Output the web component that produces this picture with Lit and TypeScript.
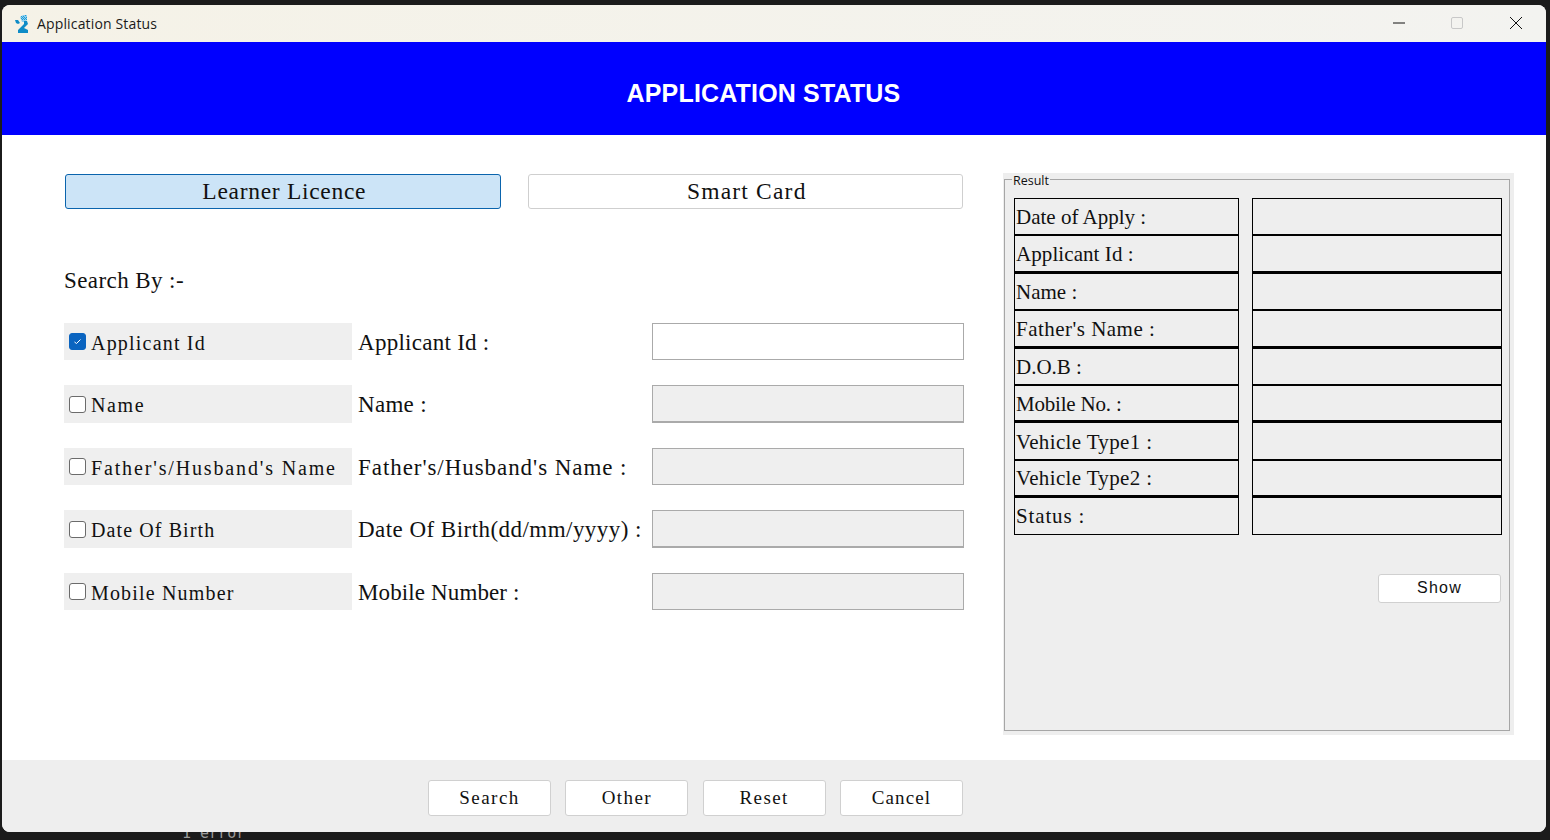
import { LitElement, html, css } from "lit";
import { customElement } from "lit/decorators.js";

// track = letter-spacing per text, the original font runs wider than Liberation Serif
const searchRows = [
  { check: "Applicant Id", checkTrack: 1.2, label: "Applicant Id :", labelTrack: 0.27, on: true },
  { check: "Name", checkTrack: 1.6, label: "Name :", labelTrack: 0.3, on: false },
  { check: "Father's/Husband's Name", checkTrack: 1.85, label: "Father's/Husband's Name :", labelTrack: 0.94, on: false },
  { check: "Date Of Birth", checkTrack: 1.1, label: "Date Of Birth(dd/mm/yyyy) :", labelTrack: 0.46, on: false },
  { check: "Mobile Number", checkTrack: 1.17, label: "Mobile Number :", labelTrack: 0.12, on: false },
];

const resultRows = [
  { label: "Date of Apply :", track: 0 },
  { label: "Applicant Id :", track: 0.08 },
  { label: "Name :", track: 0 },
  { label: "Father's Name :", track: 0.48 },
  { label: "D.O.B :", track: 0 },
  { label: "Mobile No. :", track: -0.2 },
  { label: "Vehicle Type1 :", track: 0.35 },
  { label: "Vehicle Type2 :", track: 0.35 },
  { label: "Status :", track: 0.85 },
];

const tabs = [
  { label: "Learner Licence", track: 0.7, active: true },
  { label: "Smart Card", track: 1.2, active: false },
];

const footerButtons = [
  { label: "Search", track: 1.5 },
  { label: "Other", track: 1.4 },
  { label: "Reset", track: 1.4 },
  { label: "Cancel", track: 1.1 },
];

@customElement("app-root")
export class AppRoot extends LitElement {
  static styles = css`
    :host {
      display: block;
      width: 1550px;
      height: 840px;
      overflow: hidden;
      background: #1b1b1b;
      font-family: "Liberation Serif", serif;
      color: #111;
    }
    .desktop {
      padding: 5px 4px 0 2px;
    }
    .window {
      height: 827px;
      display: flex;
      flex-direction: column;
      border-radius: 8px;
      overflow: hidden;
      background: #fff;
    }
    .titlebar {
      height: 37px;
      flex: none;
      display: flex;
      align-items: center;
      padding-right: 1px;
      background: linear-gradient(90deg, #f5f2e7, #f3f3f0);
      font-family: "Open Sans", "Liberation Sans", sans-serif;
      font-size: 14px;
      letter-spacing: 0.15px;
      color: #1a1a1a;
    }
    .app-icon {
      margin-left: 13px;
      margin-right: 6px;
      width: 16px;
      height: 18px;
    }
    .title-text {
      flex: 1;
    }
    .win-btn {
      width: 58px;
      height: 36px;
      margin-bottom: 1px;
      display: flex;
      align-items: center;
      justify-content: center;
    }
    .win-btn.max {
      margin-right: 1px;
    }
    .banner {
      height: 93px;
      flex: none;
      box-sizing: border-box;
      background: #0000ff;
      color: #fff;
      display: flex;
      align-items: center;
      justify-content: center;
      font-family: "Liberation Sans", sans-serif;
      font-weight: 700;
      font-size: 25px;
      letter-spacing: 0.17px;
      padding: 9px 21px 0 0;
    }
    .content {
      flex: 1;
      display: flex;
      padding: 38px 32px 25px 62px;
    }
    .left {
      width: 900px;
      flex: none;
      padding-top: 1px;
    }
    .tabs {
      display: flex;
      gap: 27px;
      padding-left: 1px;
      padding-right: 1px;
    }
    .tab {
      height: 35px;
      flex: 1 1 0;
      box-sizing: border-box;
      border: 1px solid #cfcfcf;
      border-radius: 3px;
      background: #fff;
      display: flex;
      align-items: center;
      justify-content: center;
      padding-left: 3px;
      font-size: 23.5px;
    }
    .tab.active {
      background: #cce4f7;
      border-color: #0a64ad;
    }
    .search-by {
      margin-top: 59px;
      height: 26px;
      line-height: 26px;
      font-size: 23px;
      letter-spacing: 0.42px;
    }
    .rows {
      margin-top: 28.9px;
      display: grid;
      grid-template-columns: 288px 300px 312px;
      grid-auto-rows: 37.5px;
      row-gap: 25px;
    }
    .check-cell {
      background: #efefef;
      display: flex;
      align-items: center;
      gap: 5px;
      padding-left: 5px;
      font-size: 20px;
      white-space: nowrap;
    }
    .check-text {
      padding-top: 3px;
    }
    .box {
      width: 15px;
      height: 15px;
      flex: none;
      border: 1px solid #6b6b6b;
      border-radius: 3px;
      background: #fff;
      display: flex;
      align-items: center;
      justify-content: center;
    }
    .box.on {
      background: #0a64c0;
      border-color: #0a64c0;
    }
    .field-label {
      display: flex;
      align-items: center;
      padding: 2px 0 0 6px;
      font-size: 23px;
      white-space: nowrap;
    }
    .input {
      box-sizing: border-box;
      border: 1px solid #aaa;
      background: #efefef;
    }
    .input.on {
      background: #fff;
    }
    .input.bottom {
      border-bottom-width: 2px;
    }
    .panel {
      margin-left: 39px;
      width: 511px;
      height: 562px;
      flex: none;
      box-sizing: border-box;
      background: #eee;
      padding: 0 4px 4px 1px;
    }
    fieldset {
      margin: -2px 0 0;
      height: calc(100% + 2px);
      box-sizing: border-box;
      border: 1px solid #a6a6a6;
      padding: 11px 8px 0 9px;
      min-width: 0;
    }
    legend {
      margin-left: -2px;
      padding: 4px 1px 0;
      font-family: "Open Sans", "Liberation Sans", sans-serif;
      font-size: 12.5px;
      line-height: 12px;
      color: #111;
    }
    .result-grid {
      display: grid;
      grid-template-columns: 225px 250px;
      column-gap: 13px;
      grid-auto-rows: 37.4px;
    }
    .result-cell {
      box-sizing: border-box;
      border: 1px solid #000;
      display: flex;
      align-items: center;
      padding: 2px 0 0 1px;
      font-size: 21px;
      white-space: nowrap;
    }
    .result-cell.thick {
      border-bottom-width: 2px;
    }
    .show-row {
      display: flex;
      justify-content: flex-end;
      margin-top: 39px;
    }
    .btn {
      box-sizing: border-box;
      width: 123px;
      border: 1px solid #d0d0d0;
      border-radius: 3px;
      background: #fff;
      display: flex;
      align-items: center;
      justify-content: center;
      color: #111;
    }
    .show {
      height: 29px;
      font-family: "Liberation Sans", sans-serif;
      font-size: 16px;
      letter-spacing: 1.2px;
    }
    .footer {
      height: 72px;
      flex: none;
      background: #eee;
      display: flex;
      gap: 14.33px;
      padding: 20px 0 0 426px;
      box-sizing: border-box;
    }
    .footer .btn {
      height: 36px;
      font-size: 19px;
    }
    .peek {
      padding-left: 182px;
      height: 8px;
      overflow: hidden;
      font-family: "DejaVu Sans Mono", monospace;
      font-size: 15px;
      line-height: 2px;
      color: #9a9a9a;
    }
  `;

  render() {
    return html`
      <div class="desktop">
        <div class="window">
          <div class="titlebar">
            <svg class="app-icon" viewBox="0 0 16 18">
              <path fill="#8fd0ee" d="M5 2l3-2h4v5l-2 2H7z" />
              <path fill="#1e9bd7" d="M6 1h1v1H6zM8 1h1v1H8zM10 0h1v1h-1zM7 2h1v1H7zM9 2h1v1H9zM11 2h1v1h-1zM6 3h1v1H6zM8 3h1v1H8zM10 3h1v1h-1zM7 4h1v1H7zM9 4h1v1H9zM11 4h1v1h-1z" />
              <path fill="#0f8cc7" d="M0 5h3l2 3-2 1-2-1zM9 6h3l1 3-4 4 4 2v3H3v-3l6-6z" />
            </svg>
            <span class="title-text">Application Status</span>
            <div class="win-btn">
              <svg width="12" height="12" viewBox="0 0 12 12"><path d="M0 6h12" stroke="#111" fill="none" /></svg>
            </div>
            <div class="win-btn max">
              <svg width="12" height="12" viewBox="0 0 12 12"><rect x=".5" y=".5" width="11" height="11" rx="1.5" stroke="#c8c8c8" fill="none" /></svg>
            </div>
            <div class="win-btn">
              <svg width="12" height="12" viewBox="0 0 12 12"><path d="M0 0l12 12M12 0L0 12" stroke="#111" fill="none" /></svg>
            </div>
          </div>
          <div class="banner">APPLICATION STATUS</div>
          <div class="content">
            <div class="left">
              <div class="tabs">
                ${tabs.map(
                  (t) => html`<div class="tab ${t.active ? "active" : ""}" style="letter-spacing: ${t.track}px">${t.label}</div>`
                )}
              </div>
              <div class="search-by">Search By :-</div>
              <div class="rows">
                ${searchRows.map(
                  (r, i) => html`
                    <div class="check-cell">
                      <span class="box ${r.on ? "on" : ""}">
                        ${r.on
                          ? html`<svg width="11" height="11" viewBox="0 0 11 11"><path d="M2.5 6l2 1.5L8.5 3.5" stroke="#fff" fill="none" /></svg>`
                          : ""}
                      </span>
                      <span class="check-text" style="letter-spacing: ${r.checkTrack}px">${r.check}</span>
                    </div>
                    <div class="field-label" style="letter-spacing: ${r.labelTrack}px">${r.label}</div>
                    <div class="input ${r.on ? "on" : ""} ${i % 2 ? "bottom" : ""}"></div>
                  `
                )}
              </div>
            </div>
            <div class="panel">
              <fieldset>
                <legend>Result</legend>
                <div class="result-grid">
                  ${resultRows.map(
                    (r, i) => html`
                      <div class="result-cell ${i % 2 ? "thick" : ""}" style="letter-spacing: ${r.track}px">${r.label}</div>
                      <div class="result-cell ${i % 2 ? "thick" : ""}"></div>
                    `
                  )}
                </div>
                <div class="show-row"><div class="btn show">Show</div></div>
              </fieldset>
            </div>
          </div>
          <div class="footer">
            ${footerButtons.map((b) => html`<div class="btn" style="letter-spacing: ${b.track}px">${b.label}</div>`)}
          </div>
        </div>
      </div>
      <div class="peek">1 error</div>
    `;
  }
}
